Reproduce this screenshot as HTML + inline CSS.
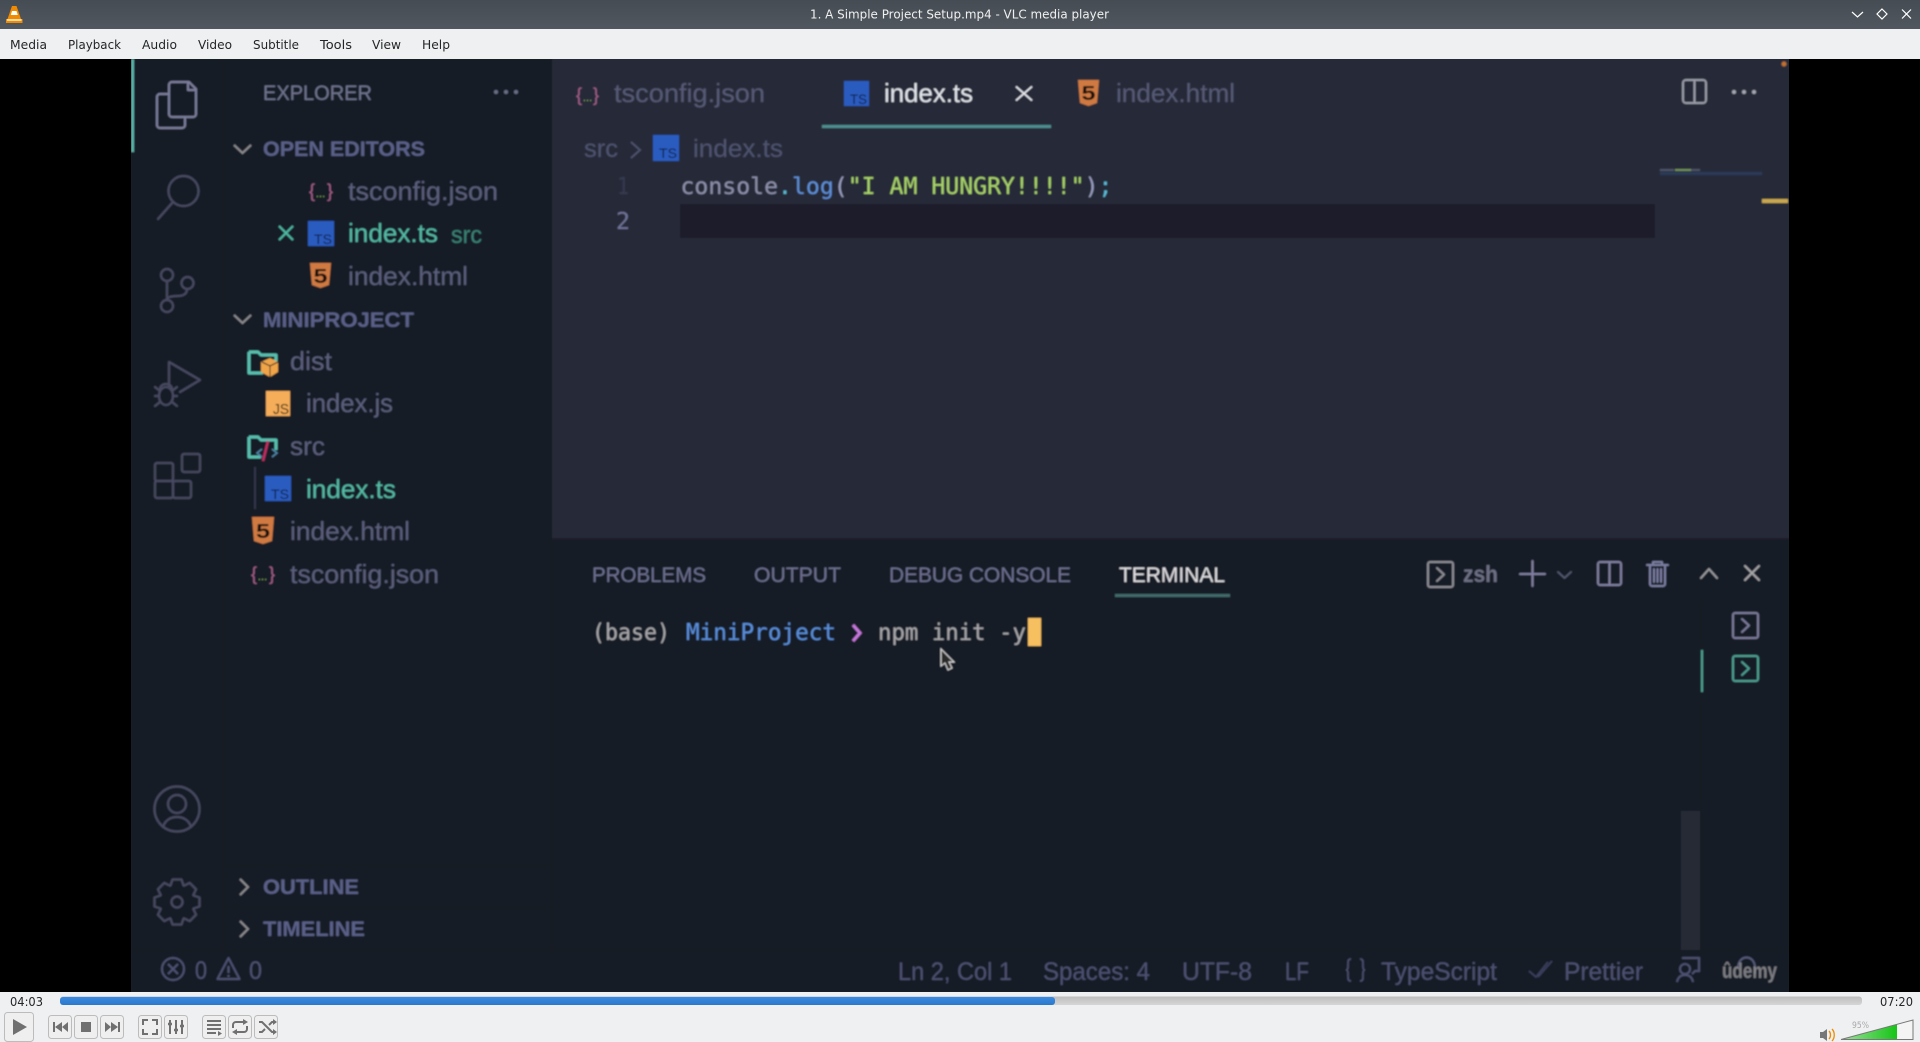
<!DOCTYPE html>
<html lang="en"><head><meta charset="utf-8"><title>1. A Simple Project Setup.mp4 - VLC media player</title>
<style>
html,body{margin:0;padding:0;width:1920px;height:1042px;overflow:hidden;background:#000}
svg{display:block}
text{font-family:"Liberation Sans",sans-serif;white-space:pre}
.m{font-family:"DejaVu Sans Mono","Liberation Mono",monospace}
.ui{font-family:"DejaVu Sans","Liberation Sans",sans-serif}
.h{font-weight:bold;fill:#5a6188;font-size:21px}
.f{font-size:26px;fill:#5c5f7c}
.s{font-size:25px;fill:#4d5171}
.p{font-size:21px;fill:#6d7090}
.i{fill:none;stroke:#474a61;stroke-width:2.2;stroke-linecap:round;stroke-linejoin:round}
.b{fill:#efeff0;stroke:#bcbcbc;stroke-width:1}
.g{fill:#707070}
</style></head><body>
<svg xmlns="http://www.w3.org/2000/svg" width="1920" height="1042" viewBox="0 0 1920 1042">
<defs>
<filter id="bl" x="0" y="0" width="100%" height="100%" filterUnits="objectBoundingBox"><feGaussianBlur stdDeviation="0.85"/></filter>
<linearGradient id="tb" x1="0" y1="0" x2="0" y2="1"><stop offset="0" stop-color="#454c53"/><stop offset="1" stop-color="#50575e"/></linearGradient>
<linearGradient id="sk" x1="0" y1="0" x2="0" y2="1"><stop offset="0" stop-color="#bdbdbd"/><stop offset="1" stop-color="#d6d6d6"/></linearGradient>
<linearGradient id="bl2" x1="0" y1="0" x2="0" y2="1"><stop offset="0" stop-color="#3a8ae0"/><stop offset="1" stop-color="#2a78cc"/></linearGradient>
<linearGradient id="vg" x1="0" y1="0" x2="1" y2="0"><stop offset="0" stop-color="#9ce09c"/><stop offset="1" stop-color="#16c516"/></linearGradient>
</defs>

<rect width="1920" height="1042" fill="#000"/>
<rect x="131" y="59" width="1658" height="933" fill="#191c28"/>
<rect x="552" y="59" width="1237" height="479" fill="#262938"/>

<!-- VIDEO CONTENT -->
<g filter="url(#bl)">
<rect x="131" y="59" width="1658" height="933" fill="#191c28"/>
<rect x="552" y="59" width="1237" height="479" fill="#262938"/>
<rect x="552" y="538" width="1237" height="2" fill="#1d1f2c"/>
<rect x="223" y="59" width="1" height="891" fill="#14161f"/>
<rect x="551" y="59" width="1" height="891" fill="#14161f"/>
<rect x="131" y="950" width="1658" height="1" fill="#14161f"/>
<rect x="1655" y="204" width="134" height="334" fill="#272a39"/>
<rect x="131" y="59" width="3" height="93" fill="#5ab3a8"/>

<!-- activity icons -->
<g class="i" style="stroke:#7b7e9b">
<path d="M172 82h17l7 7v25a3 3 0 0 1-3 3h-21a3 3 0 0 1-3-3V85a3 3 0 0 1 3-3z"/><path d="M188 82v8h8"/>
<path d="M169 94h-9a3 3 0 0 0-3 3v28a3 3 0 0 0 3 3h22a3 3 0 0 0 3-3v-8"/>
</g>
<g class="i">
<circle cx="183.500" cy="191" r="15"/><path d="M173 202l-15 17"/>
<circle cx="167" cy="275" r="6"/><circle cx="187.500" cy="283" r="6"/><circle cx="167" cy="306" r="6"/>
<path d="M167 281v19M187 289c0 6-5 7-10 7-5 0-10 1-10 4"/>
<path d="M169 386v-24l31 18-20 12"/>
<ellipse cx="166" cy="396" rx="7" ry="9"/><path d="M155 387l5 4M177 387l-5 4M155 396h4M177 396h-4M155 406l5-4M177 406l-5-4M160 389a6 5 0 0 1 12 0"/>
<rect x="155" y="463" width="18" height="18" rx="2"/><rect x="155" y="481" width="18" height="17" rx="2"/><rect x="173" y="481" width="18" height="17" rx="2"/><rect x="182" y="454" width="18" height="18" rx="2"/>
<circle cx="177" cy="809" r="22.500"/><circle cx="177" cy="804" r="9"/><path d="M163 827c2-7 8-10 14-10s12 3 14 10"/>
<g transform="translate(177 902)"><path d="M-6.500 -16.500L-4.500 -22.500L4.500 -22.500L6.500 -16.500L7 -16.300L12.700 -19.100L19.100 -12.700L16.300 -7L16.500 -6.500L22.500 -4.500L22.500 4.500L16.500 6.500L16.300 7L19.100 12.700L12.700 19.100L7 16.300L6.500 16.500L4.500 22.500L-4.500 22.500L-6.500 16.500L-7 16.300L-12.700 19.100L-19.100 12.700L-16.300 7L-16.500 6.500L-22.500 4.500L-22.500 -4.500L-16.500 -6.500L-16.300 -7L-19.100 -12.700L-12.700 -19.100L-7 -16.300Z"/><circle r="5.500"/></g>
</g>

<!-- sidebar -->
<text x="263" y="100" font-size="21" fill="#70748f" textLength="109" lengthAdjust="spacingAndGlyphs">EXPLORER</text>
<circle cx="496" cy="92" r="2" fill="#6b6e88"/><circle cx="506" cy="92" r="2" fill="#6b6e88"/><circle cx="516" cy="92" r="2" fill="#6b6e88"/>
<path d="M234 145l8.500 8 8.500-8M234 315l8.500 8 8.500-8" fill="none" stroke="#8b8b8f" stroke-width="2"/>
<text class="h" x="263" y="156" textLength="162" lengthAdjust="spacingAndGlyphs">OPEN EDITORS</text>
<text class="f" x="348" y="200" textLength="150" lengthAdjust="spacingAndGlyphs">tsconfig.json</text>
<rect x="224" y="211" width="327" height="44" fill="#171a25"/>
<path d="M279 226l14 14M293 226l-14 14" stroke="#4fb8a3" stroke-width="2" fill="none"/>
<rect x="308" y="221" width="26" height="25" fill="#2a5bc0"/><text x="314" y="244" font-size="14" fill="#0e1e40" textLength="18" lengthAdjust="spacingAndGlyphs">TS</text>
<text class="f" x="348" y="242" style="fill:#55bba6" textLength="90" lengthAdjust="spacingAndGlyphs">index.ts</text>
<text x="451" y="243" font-size="24" fill="#3a8476" textLength="31" lengthAdjust="spacingAndGlyphs">src</text>
<text class="f" x="348" y="285" textLength="120" lengthAdjust="spacingAndGlyphs">index.html</text>
<text class="h" x="263" y="327" textLength="151" lengthAdjust="spacingAndGlyphs">MINIPROJECT</text>

<!-- json icon 1 -->
<text x="309" y="197" font-size="18" fill="#a5618c" textLength="24" lengthAdjust="spacing">{ }</text>
<text x="316" y="197" font-size="10" fill="#8bbb58" textLength="9">...</text>
<!-- html icon 1 -->
<path d="M310 263h21l-2 22-8.500 3-8.500-3z" fill="#d07a42"/><text x="313.500" y="283" font-size="20" font-weight="bold" fill="#14100c" textLength="14" lengthAdjust="spacingAndGlyphs">5</text>

<!-- tree -->
<path d="M249 352h9l3 3h15v6h-4M249 352v21h14" fill="none" stroke="#59bfb0" stroke-width="3" stroke-linejoin="round"/>
<path d="M270 358l8 4v10l-8 5-9-5v-10z" fill="#f0a54a"/><path d="M262 362l8 4 8-4M270 366v11" stroke="#1a1c28" stroke-width="1" fill="none"/>
<text class="f" x="290" y="370" textLength="42" lengthAdjust="spacingAndGlyphs">dist</text>
<rect x="266" y="391" width="24" height="25" fill="#f5ad5a"/><text x="273" y="414" font-size="15" fill="#1e1608" textLength="16" lengthAdjust="spacingAndGlyphs">JS</text>
<text class="f" x="306" y="412" textLength="87" lengthAdjust="spacingAndGlyphs">index.js</text>
<path d="M249 437h9l3 3h15v10M249 437v20h12" fill="none" stroke="#59bfb0" stroke-width="3" stroke-linejoin="round"/>
<path d="M268 441l-5 20" stroke="#c02e60" stroke-width="2.500"/><path d="M262 449l-5 4 5 4M272 449l5 4-5 4" stroke="#4f88a8" stroke-width="1.500" fill="none"/>
<text class="f" x="290" y="455" textLength="35" lengthAdjust="spacingAndGlyphs">src</text>
<rect x="224" y="467" width="327" height="42" fill="#171a25"/>
<rect x="254" y="467" width="2" height="42" fill="#33364a"/>
<rect x="265" y="476" width="26" height="25" fill="#2a5bc0"/><text x="271" y="499" font-size="14" fill="#0e1e40" textLength="18" lengthAdjust="spacingAndGlyphs">TS</text>
<text class="f" x="306" y="498" style="fill:#55bba6" textLength="90" lengthAdjust="spacingAndGlyphs">index.ts</text>
<path d="M252 517h22l-2 24-9 3-9-3z" fill="#d07a42"/><text x="256" y="538" font-size="20" font-weight="bold" fill="#14100c" textLength="14" lengthAdjust="spacingAndGlyphs">5</text>
<text class="f" x="290" y="540" textLength="120" lengthAdjust="spacingAndGlyphs">index.html</text>
<text x="251" y="580" font-size="18" fill="#a5618c" textLength="24" lengthAdjust="spacing">{ }</text>
<text x="258" y="580" font-size="10" fill="#8bbb58" textLength="9">...</text>
<text class="f" x="290" y="583" textLength="149" lengthAdjust="spacingAndGlyphs">tsconfig.json</text>

<rect x="224" y="865" width="327" height="1" fill="#14161f"/><rect x="224" y="907" width="327" height="1" fill="#14161f"/>
<path d="M240 879l8 8-8 8M240 921l8 8-8 8" fill="none" stroke="#8b8b8f" stroke-width="2"/>
<text class="h" x="263" y="894" textLength="96" lengthAdjust="spacingAndGlyphs">OUTLINE</text>
<text class="h" x="263" y="936" textLength="102" lengthAdjust="spacingAndGlyphs">TIMELINE</text>

<!-- editor tabs -->
<text x="576" y="101" font-size="18" fill="#a5618c" textLength="23" lengthAdjust="spacing">{ }</text>
<text x="583" y="101" font-size="10" fill="#8bbb58" textLength="9">...</text>
<text class="f" x="614" y="102" style="fill:#565a76" textLength="151" lengthAdjust="spacingAndGlyphs">tsconfig.json</text>
<rect x="844" y="81" width="25" height="25" fill="#2a5bc0"/><text x="850" y="104" font-size="14" fill="#0e1e40" textLength="17" lengthAdjust="spacingAndGlyphs">TS</text>
<text class="f" x="884" y="102" style="fill:#e4e6ee" textLength="89" lengthAdjust="spacingAndGlyphs">index.ts</text>
<path d="M1016 86.500l16 14M1032 86.500l-16 14" stroke="#e8e8f0" stroke-width="1.800" fill="none"/>
<rect x="822" y="125" width="229" height="3" fill="#4e8f8f"/>
<path d="M1078 80h21l-2 23-8.500 3-8.500-3z" fill="#d07a42"/><text x="1081.500" y="100" font-size="20" font-weight="bold" fill="#14100c" textLength="14" lengthAdjust="spacingAndGlyphs">5</text>
<text class="f" x="1116" y="102" style="fill:#565a76" textLength="119" lengthAdjust="spacingAndGlyphs">index.html</text>
<rect x="1683" y="80" width="23" height="23" rx="3" fill="none" stroke="#9a9ca8" stroke-width="2"/><path d="M1694.500 80v23" stroke="#9a9ca8" stroke-width="2"/>
<circle cx="1734" cy="92" r="2" fill="#a5a7b2"/><circle cx="1744" cy="92" r="2" fill="#a5a7b2"/><circle cx="1754" cy="92" r="2" fill="#a5a7b2"/>
<circle cx="1784" cy="64" r="2.500" fill="#c07030"/>

<!-- breadcrumb -->
<text x="584" y="157" font-size="25" fill="#4f5370" textLength="34" lengthAdjust="spacingAndGlyphs">src</text>
<path d="M631 142l9 8-9 8" fill="none" stroke="#4f5370" stroke-width="1.800"/>
<rect x="653" y="135" width="26" height="26" fill="#2a5bc0"/><text x="659" y="158" font-size="14" fill="#0e1e40" textLength="18" lengthAdjust="spacingAndGlyphs">TS</text>
<text x="693" y="157" font-size="25" fill="#4f5370" textLength="90" lengthAdjust="spacingAndGlyphs">index.ts</text>

<!-- code -->
<rect x="680" y="204" width="975" height="34" fill="#1c1e2b"/>
<text class="m" x="617" y="194" font-size="23" fill="#363a50" textLength="12" lengthAdjust="spacingAndGlyphs">1</text>
<text class="m" x="616" y="229" font-size="23" fill="#6f7396" textLength="14" lengthAdjust="spacingAndGlyphs">2</text>
<text class="m" x="680.500" y="194" font-size="23" textLength="432" lengthAdjust="spacingAndGlyphs"><tspan fill="#8d90ab">console</tspan><tspan fill="#5bb8d4">.</tspan><tspan fill="#5f8fd8">log</tspan><tspan fill="#9a9ec0">(</tspan><tspan fill="#a9d46a">"I AM HUNGRY!!!!"</tspan><tspan fill="#9a9ec0">)</tspan><tspan fill="#5bbad8">;</tspan></text>

<!-- minimap -->
<rect x="1660" y="172" width="102" height="3" fill="#2c3a58"/>
<rect x="1660" y="169" width="14" height="2" fill="#50546a"/><rect x="1675" y="169" width="16" height="2" fill="#72915a"/><rect x="1691" y="169" width="9" height="2" fill="#4f5268"/>
<rect x="1762" y="199" width="26" height="4" fill="#c8a850"/>

<!-- panel -->
<text class="p" x="592" y="582" textLength="114" lengthAdjust="spacingAndGlyphs">PROBLEMS</text>
<text class="p" x="754" y="582" textLength="87" lengthAdjust="spacingAndGlyphs">OUTPUT</text>
<text class="p" x="889" y="582" textLength="182" lengthAdjust="spacingAndGlyphs">DEBUG CONSOLE</text>
<text class="p" x="1119" y="582" style="fill:#e0e0e4" textLength="106" lengthAdjust="spacingAndGlyphs">TERMINAL</text>
<rect x="1115" y="594" width="115" height="3" fill="#3f6a6a"/>
<text class="m" x="592" y="640" font-size="23" fill="#a8a8ac" textLength="78" lengthAdjust="spacingAndGlyphs">(base)</text>
<text class="m" x="686" y="640" font-size="23" fill="#5a8fdc" textLength="150" lengthAdjust="spacingAndGlyphs">MiniProject</text>
<path d="M853 625l7 8-7 8" fill="none" stroke="#c678dd" stroke-width="3"/>
<text class="m" x="878" y="640" font-size="23" fill="#a8a8ac" textLength="148" lengthAdjust="spacingAndGlyphs">npm init -y</text>
<rect x="1028" y="618" width="13" height="28" fill="#f6c061"/>
<path d="M941 649v17l4-3 3 7 4-2-3-6h5z" fill="#2a2a2a" stroke="#ddd" stroke-width="1"/>

<g fill="none" stroke-linejoin="round" stroke-linecap="round">
<rect x="1428" y="562" width="25" height="25" rx="2" stroke="#8d8d95" stroke-width="2"/><path d="M1437 568l7 6.500-7 6.500" stroke="#8d8d95" stroke-width="2"/>
<path d="M1520 574h25M1532.500 561v25" stroke="#8080a0" stroke-width="2"/>
<path d="M1558 572l6.500 6 6.500-6" stroke="#55586f" stroke-width="1.800"/>
<rect x="1598" y="562" width="23" height="23" rx="2" stroke="#8080a0" stroke-width="2"/><path d="M1609.500 562v23" stroke="#8080a0" stroke-width="2"/>
<path d="M1647 565h21M1653 565v-3h9v3M1650 565v19a2 2 0 0 0 2 2h11a2 2 0 0 0 2-2v-19M1654 569v13M1657.500 569v13M1661 569v13" stroke="#7c7ea0" stroke-width="2"/>
<path d="M1701 578l8-9 8 9" stroke="#9a9a9e" stroke-width="2"/>
<path d="M1745 566l14 14M1759 566l-14 14" stroke="#a5a5a8" stroke-width="2"/>
</g>
<text x="1463" y="582" font-size="23" font-weight="bold" fill="#6d6f84" textLength="35" lengthAdjust="spacingAndGlyphs">zsh</text>
<rect x="1701" y="600" width="1" height="350" fill="#15171f"/>
<rect x="1702" y="650" width="87" height="42" fill="#171a25"/>
<rect x="1701" y="650" width="2" height="42" fill="#4d9f92"/>
<g fill="none" stroke-linejoin="round" stroke-linecap="round">
<rect x="1733" y="613" width="25" height="25" rx="2" stroke="#7b7b9b" stroke-width="2"/><path d="M1742 619l7 6.500-7 6.500" stroke="#7b7b9b" stroke-width="2"/>
<rect x="1733" y="656" width="25" height="25" rx="2" stroke="#4d9f92" stroke-width="2"/><path d="M1742 662l7 6.500-7 6.500" stroke="#4d9f92" stroke-width="2"/>
</g>
<rect x="1681" y="811" width="19" height="139" fill="#262935"/>

<!-- status -->
<g fill="none" stroke="#4d5171" stroke-width="2">
<circle cx="173" cy="969" r="11"/><path d="M168 964l10 10M178 964l-10 10"/>
<path d="M228.500 958l11 21h-22z" stroke-linejoin="round"/><path d="M228.500 966v7M228.500 975v2"/>
<path d="M1351 959c-3 0-3 2-3 5v3c0 2-1 3-2 3 1 0 2 1 2 3v3c0 3 0 5 3 5M1360 959c3 0 3 2 3 5v3c0 2 1 3 2 3-1 0-2 1-2 3v3c0 3 0 5-3 5" stroke-width="1.600"/>
<path d="M1529 971l7 6 12-15M1538 977l14-16" stroke-width="1.600" stroke="#3d4160"/>
<circle cx="1685" cy="969" r="5" /><path d="M1677 982c1-5 4-7 8-7s7 2 8 7M1682 958h17v13h-4l-3 3"/>
<path d="M1738 968c0-14 17-14 17 0v6" stroke="#565a78"/>
</g>
<text class="s" x="195" y="979" textLength="12" lengthAdjust="spacingAndGlyphs">0</text>
<text class="s" x="249" y="979" textLength="13" lengthAdjust="spacingAndGlyphs">0</text>
<text class="s" x="898" y="980" textLength="114" lengthAdjust="spacingAndGlyphs">Ln 2, Col 1</text>
<text class="s" x="1043" y="980" textLength="107" lengthAdjust="spacingAndGlyphs">Spaces: 4</text>
<text class="s" x="1182" y="980" textLength="70" lengthAdjust="spacingAndGlyphs">UTF-8</text>
<text class="s" x="1285" y="980" textLength="24" lengthAdjust="spacingAndGlyphs">LF</text>
<text class="s" x="1381" y="980" textLength="116" lengthAdjust="spacingAndGlyphs">TypeScript</text>
<text class="s" x="1564" y="980" textLength="79" lengthAdjust="spacingAndGlyphs">Prettier</text>
<text x="1722" y="978" font-size="21" font-weight="bold" fill="#8f8f92" fill-opacity="0.85" textLength="55" lengthAdjust="spacingAndGlyphs">ûdemy</text>
</g>

<!-- TITLE BAR -->
<rect width="1920" height="29" fill="url(#tb)"/>
<path d="M14 6l2.500 0 4.500 13h1.500v4H6v-4h1.500L12 6z" fill="#f08a00"/><path d="M12 11h4.500l1.300 4h-7z" fill="#fff"/><rect x="7" y="19" width="14.500" height="2" fill="#ffd9a8"/>
<text class="ui" x="810" y="18.500" font-size="12.500" fill="#f0f0f0" textLength="299" lengthAdjust="spacingAndGlyphs">1. A Simple Project Setup.mp4 - VLC media player</text>
<g fill="none" stroke="#fff" stroke-width="1.200"><path d="M1852 12l5.500 5 5.500-5"/><path d="M1882 9l5 5-5 5-5-5z"/><path d="M1902 9.500l9 9M1911 9.500l-9 9"/></g>

<!-- MENU -->
<rect y="29" width="1920" height="30" fill="#eff0f1"/>
<g class="ui" font-size="12.500" fill="#232629">
<text class="ui" x="10" y="49" textLength="37" lengthAdjust="spacingAndGlyphs">Media</text>
<text class="ui" x="68" y="49" textLength="53" lengthAdjust="spacingAndGlyphs">Playback</text>
<text class="ui" x="142" y="49" textLength="35" lengthAdjust="spacingAndGlyphs">Audio</text>
<text class="ui" x="198" y="49" textLength="34" lengthAdjust="spacingAndGlyphs">Video</text>
<text class="ui" x="253" y="49" textLength="46" lengthAdjust="spacingAndGlyphs">Subtitle</text>
<text class="ui" x="320" y="49" textLength="32" lengthAdjust="spacingAndGlyphs">Tools</text>
<text class="ui" x="372" y="49" textLength="29" lengthAdjust="spacingAndGlyphs">View</text>
<text class="ui" x="422" y="49" textLength="28" lengthAdjust="spacingAndGlyphs">Help</text>
</g>

<!-- CONTROLS -->
<rect y="992" width="1920" height="50" fill="#eff0f1"/>
<text class="ui" x="10" y="1006" font-size="12.500" fill="#232629" textLength="33" lengthAdjust="spacingAndGlyphs">04:03</text>
<text class="ui" x="1880" y="1006" font-size="12.500" fill="#232629" textLength="33" lengthAdjust="spacingAndGlyphs">07:20</text>
<rect x="60" y="996.500" width="1802" height="8.500" rx="3" fill="url(#sk)"/>
<rect x="60" y="997" width="995" height="8" rx="3" fill="url(#bl2)"/>

<rect class="b" x="4.500" y="1012.500" width="29" height="29" rx="3"/><path class="g" d="M13 1019l14 8-14 8z"/>
<rect class="b" x="48.500" y="1015.500" width="23" height="23" rx="3"/><rect class="b" x="74.500" y="1015.500" width="23" height="23" rx="3"/><rect class="b" x="100.500" y="1015.500" width="23" height="23" rx="3"/>
<path class="g" d="M53 1022h2v10h-2zM55 1027l7-5v10zM62 1027l6-5v10z"/>
<rect class="g" x="81" y="1022" width="10" height="10"/>
<path class="g" d="M105 1022l6 5-6 5zM111 1022l7 5-7 5zM118 1022h2v10h-2z"/>
<rect class="b" x="138.500" y="1015.500" width="23" height="23" rx="3"/><rect class="b" x="164.500" y="1015.500" width="23" height="23" rx="3"/>
<path d="M143 1025v-5h5M152 1020h5v5M157 1029v5h-5M148 1034h-5v-5" fill="none" stroke="#707070" stroke-width="2"/>
<path d="M170 1020v14M176 1020v14M182 1020v14" stroke="#707070" stroke-width="2"/><path d="M168 1024h4M174 1030h4M180 1026h4" stroke="#707070" stroke-width="2.500"/>
<rect class="b" x="202.500" y="1015.500" width="23" height="23" rx="3"/><rect class="b" x="228.500" y="1015.500" width="23" height="23" rx="3"/><rect class="b" x="254.500" y="1015.500" width="23" height="23" rx="3"/>
<path d="M207 1021h14M207 1025h14M207 1029h14M207 1033h9" stroke="#707070" stroke-width="2"/><path class="g" d="M218 1031l4 2.500-4 2.500z"/>
<path d="M233 1028v-3a3 3 0 0 1 3-3h9M247 1026v3a3 3 0 0 1-3 3h-9" fill="none" stroke="#707070" stroke-width="2"/><path class="g" d="M243 1019l5 3-5 3zM237 1029l-5 3 5 3z"/>
<path d="M259 1022h3l10 10h2M259 1032h3l3-3M269 1025l3-3h2" fill="none" stroke="#707070" stroke-width="2"/><path class="g" d="M273 1019l4 3-4 3zM273 1029l4 3-4 3z"/>

<!-- volume -->
<path d="M1820 1032h3l4-3v12l-4-3h-3z" fill="#777"/><path d="M1829 1031c2 2 2 6 0 8M1832 1029c3 3 3 9 0 12" fill="none" stroke="#f08a00" stroke-width="1.300"/>
<text class="ui" x="1852" y="1028" font-size="8.500" fill="#a8a8a8" textLength="17" lengthAdjust="spacingAndGlyphs">95%</text>
<path d="M1841 1039.500L1913 1020v19.500z" fill="#f4f4f4"/>
<path d="M1841 1039.500L1897 1024.300v15.200z" fill="url(#vg)"/>
<path d="M1841 1039.500L1913 1020v19.500z" fill="none" stroke="#777" stroke-width="1"/>
</svg>
</body></html>
